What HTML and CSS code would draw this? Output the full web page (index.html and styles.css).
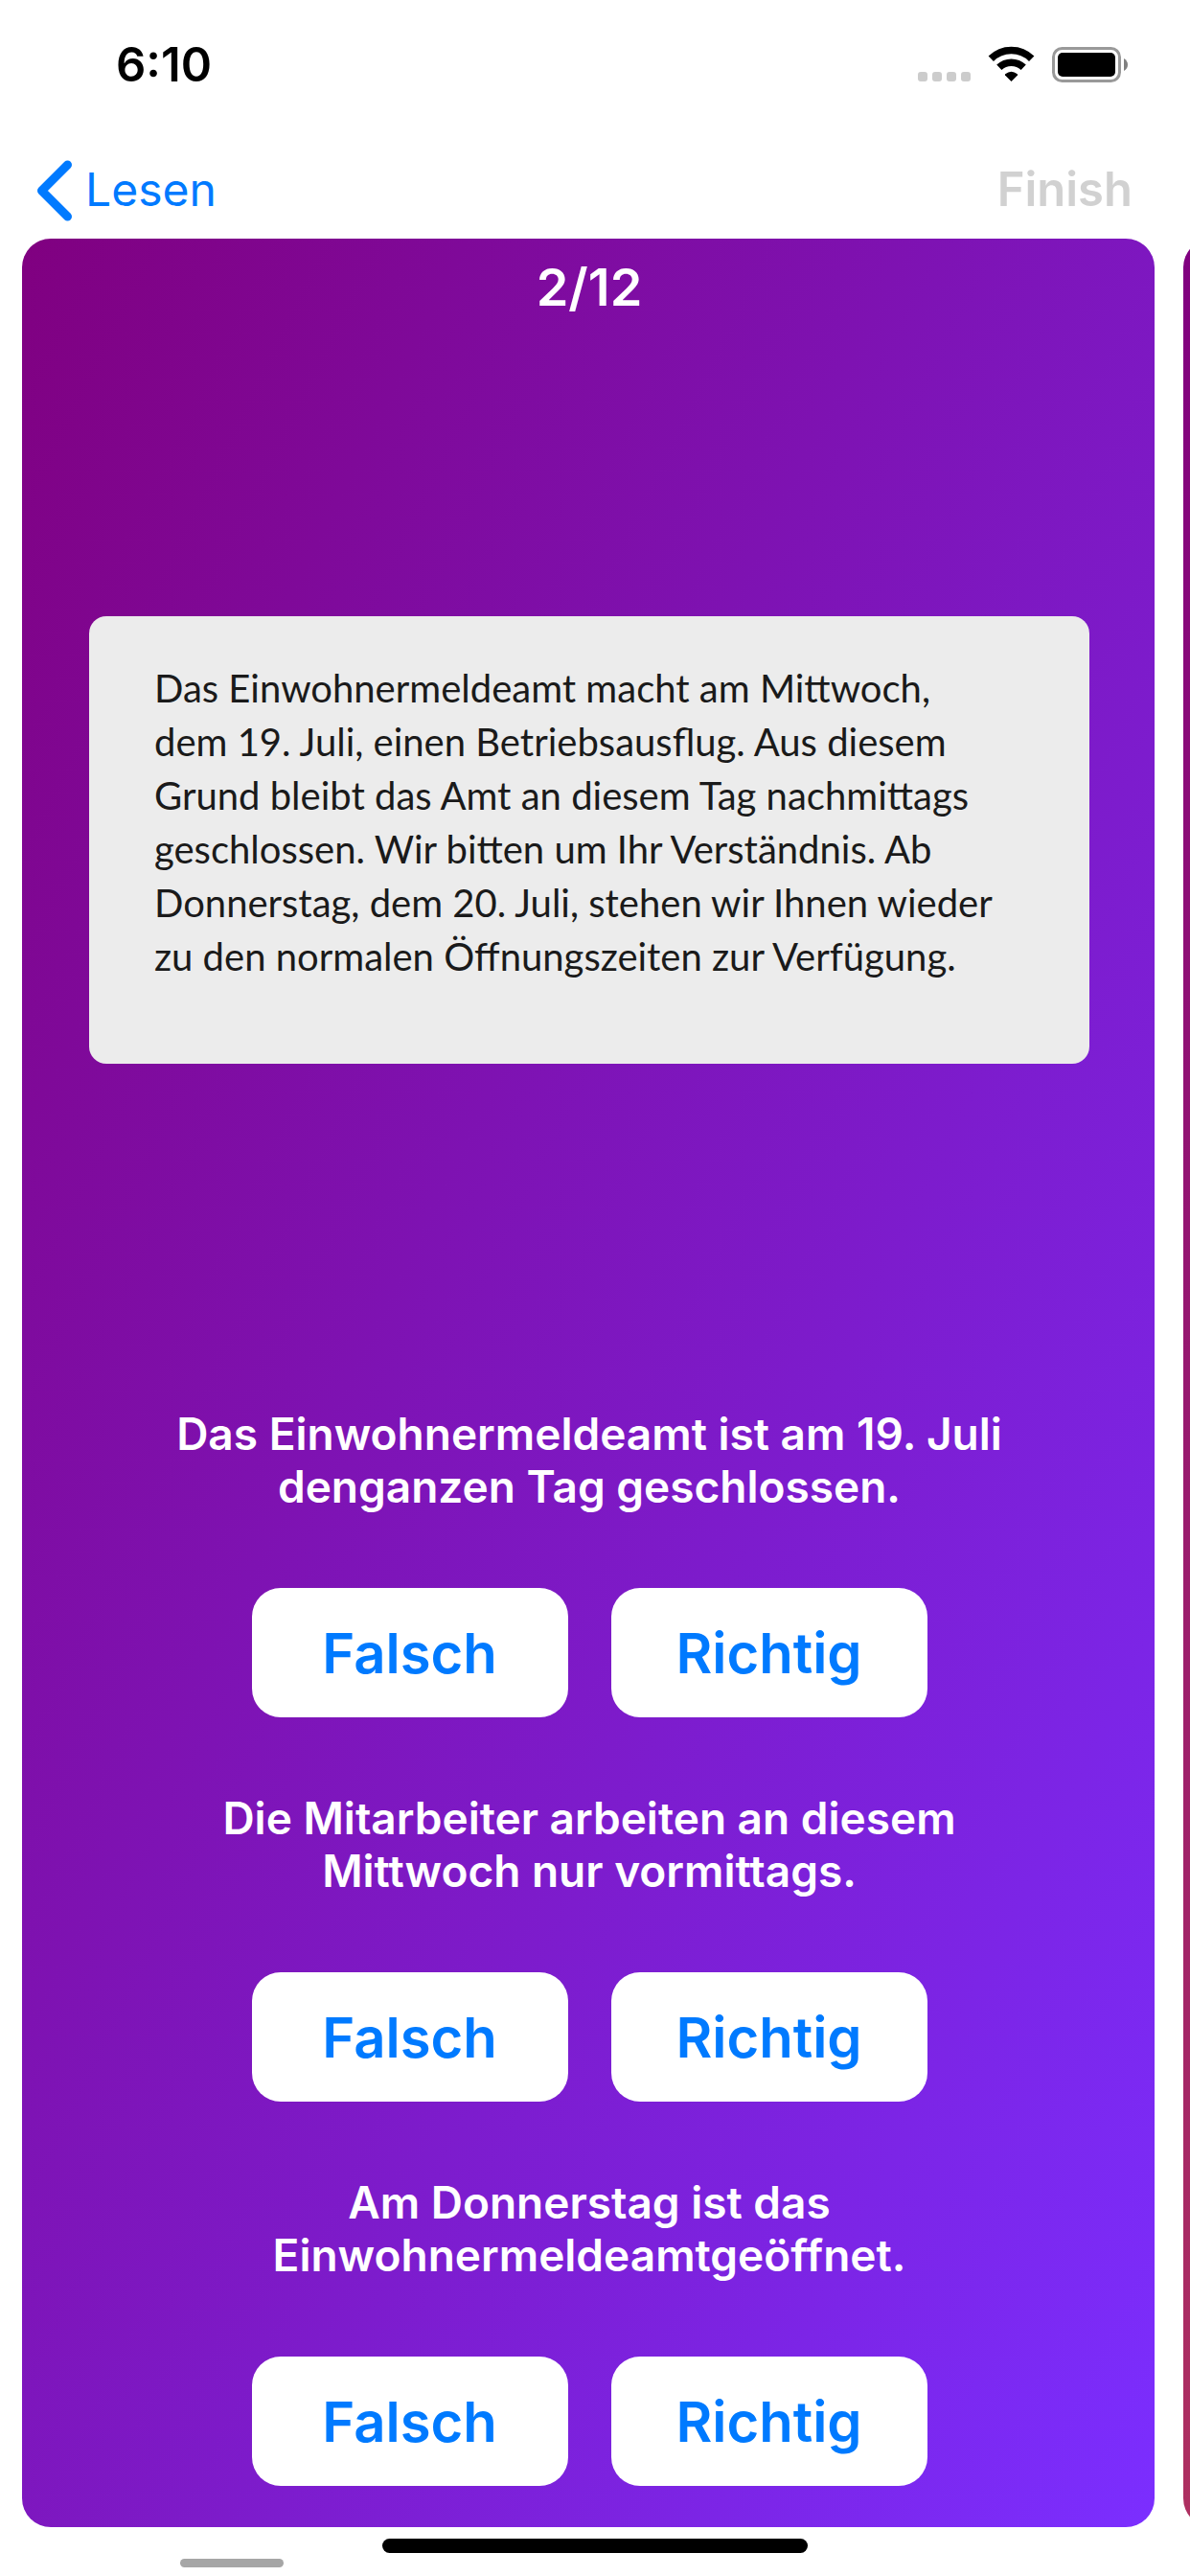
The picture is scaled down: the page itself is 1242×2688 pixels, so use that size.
FILE: index.html
```html
<!DOCTYPE html>
<html lang="de">
<head>
<meta charset="utf-8">
<meta name="viewport" content="width=device-width, initial-scale=1">
<title>Lesen – 2/12</title>
<link rel="stylesheet" href="styles.css">
</head>
<body>
<div class="screen">
  <div class="status-bar">
    <span class="status-time">6:10</span>
    <svg class="status-icons" width="220" height="38" viewBox="0 0 220 38" aria-hidden="true">
      <g fill="#cccccc">
        <rect x="0" y="27" width="10" height="10" rx="3"/>
        <rect x="15" y="27" width="10" height="10" rx="3"/>
        <rect x="30" y="27" width="10" height="10" rx="3"/>
        <rect x="45" y="27" width="10" height="10" rx="3"/>
      </g>
      <g fill="none" stroke="#000000" stroke-width="7.6">
        <path d="M76.3 13.3A30 30 0 0 1 118.7 13.3"/>
        <path d="M84.8 22.3A18.6 18.6 0 0 1 110.2 22.3"/>
      </g>
      <path d="M97.5 37L91 30.6Q90.6 29.9 91.2 29.3Q97.5 24.2 103.8 29.3Q104.4 29.9 104 30.6Z"/>
      <rect x="141.5" y="2.5" width="69" height="34" rx="9" fill="none" stroke="#999999" stroke-width="3"/>
      <rect x="146" y="7" width="60" height="25" rx="5"/>
      <path d="M215 13Q219 15.5 219 19.500Q219 23.500 215 26Z" fill="#808080"/>
    </svg>
  </div>

  <header class="nav-bar">
    <a class="back-link" href="#">
      <svg width="38" height="64" viewBox="0 0 38 64" aria-hidden="true">
        <path d="M32.500 5L5.500 32L32.500 59" fill="none" stroke="#007aff" stroke-width="9" stroke-linecap="round" stroke-linejoin="round"/>
      </svg>
      <span>Lesen</span>
    </a>
    <button class="finish-button" type="button" disabled>Finish</button>
  </header>

  <main class="pager">
    <section class="page page-current">
      <h1 class="counter">2/12</h1>
      <div class="passage-area">
        <p class="passage">Das Einwohnermeldeamt macht am Mittwoch,<br>dem 19. Juli, einen Betriebsausflug. Aus diesem<br>Grund bleibt das Amt an diesem Tag nachmittags<br>geschlossen. Wir bitten um Ihr Verständnis. Ab<br>Donnerstag, dem 20. Juli, stehen wir Ihnen wieder<br>zu den normalen Öffnungszeiten zur Verfügung.</p>
      </div>
      <div class="questions">
        <div class="question">
          <p class="question-text">Das Einwohnermeldeamt ist am 19. Juli<br>denganzen Tag geschlossen.</p>
          <div class="answers">
            <button class="answer" type="button">Falsch</button>
            <button class="answer" type="button">Richtig</button>
          </div>
        </div>
        <div class="question">
          <p class="question-text">Die Mitarbeiter arbeiten an diesem<br>Mittwoch nur vormittags.</p>
          <div class="answers">
            <button class="answer" type="button">Falsch</button>
            <button class="answer" type="button">Richtig</button>
          </div>
        </div>
        <div class="question">
          <p class="question-text">Am Donnerstag ist das<br>Einwohnermeldeamtgeöffnet.</p>
          <div class="answers">
            <button class="answer" type="button">Falsch</button>
            <button class="answer" type="button">Richtig</button>
          </div>
        </div>
      </div>
    </section>
    <section class="page page-next"></section>
  </main>

  <footer class="bottom-bar">
    <div class="home-indicator"></div>
    <div class="scroll-indicator"></div>
  </footer>
</div>
</body>
</html>
```
FILE: styles.css
```css
* {
  box-sizing: border-box;
}

body {
  margin: 0;
  background: #ffffff;
  font-family: Inter, "Liberation Sans", sans-serif;
}

h1,
p {
  margin: 0;
}

button {
  border: 0;
  padding: 0;
  font-family: inherit;
}

.screen {
  display: flex;
  flex-direction: column;
  min-height: 100vh;
}

/* Status bar */
.status-bar {
  display: flex;
  align-items: center;
  justify-content: space-between;
  height: 134px;
  padding: 0 64px 0 121px;
}

.status-time {
  font-size: 49px;
  font-weight: 600;
  color: #000000;
}

.status-icons {
  display: block;
}

/* Navigation bar */
.nav-bar {
  display: flex;
  align-items: center;
  justify-content: space-between;
  height: 115px;
  padding: 14px 60px 0 38px;
}

.back-link {
  display: flex;
  align-items: center;
  gap: 13px;
  font-size: 48px;
  line-height: 58px;
  color: #007aff;
  text-decoration: none;
}

.back-link span {
  padding-bottom: 2px;
}

.finish-button {
  padding-bottom: 2px;
  background: none;
  font-size: 49px;
  line-height: 58px;
  font-weight: 560;
  color: #d1d1d1;
}

.pager {
  flex: 1;
  display: grid;
  grid-template-columns: calc(100% - 37px) 100%;
  gap: 30px;
  padding-left: 23px;
  overflow: hidden;
}

.page {
  border-radius: 30px;
}

.page-current {
  display: flex;
  flex-direction: column;
  padding: 19px 68px 43px 70px;
  background: linear-gradient(to bottom right, #800080, #7b2eff);
  color: #ffffff;
}

.page-next {
  background: linear-gradient(to bottom right, #800080, #dc6040);
}

.counter {
  font-size: 54px;
  font-weight: 560;
  line-height: 64px;
  text-align: center;
}

.passage-area {
  flex: 1;
  display: flex;
  flex-direction: column;
  justify-content: center;
  margin-bottom: 48px;
}

.passage {
  padding: 47px 60px 84px 68px;
  border-radius: 18px;
  background: #ececec;
  color: #1a1a1a;
  font-family: Lato, "Liberation Sans", sans-serif;
  font-size: 40px;
  line-height: 56px;
}

/* Questions */
.questions {
  display: flex;
  flex-direction: column;
  gap: 78px;
}

.question {
  display: flex;
  flex-direction: column;
  gap: 78px;
}

.question-text {
  font-size: 46px;
  font-weight: 560;
  line-height: 55px;
  text-align: center;
}

.answers {
  display: flex;
  justify-content: center;
  gap: 45px;
}

.answer {
  width: 330px;
  height: 135px;
  border-radius: 30px;
  background: #ffffff;
  color: #007aff;
  font-size: 58px;
  font-weight: 560;
}

/* Bottom edge */
.bottom-bar {
  display: flex;
  flex-direction: column;
  gap: 6px;
  padding: 12px 0 9px;
}

.home-indicator {
  align-self: center;
  width: 444px;
  height: 15px;
  border-radius: 8px;
  background: #000000;
}

.scroll-indicator {
  width: 108px;
  height: 9px;
  margin-left: 188px;
  border-radius: 5px;
  background: #a6a6a6;
}
```
